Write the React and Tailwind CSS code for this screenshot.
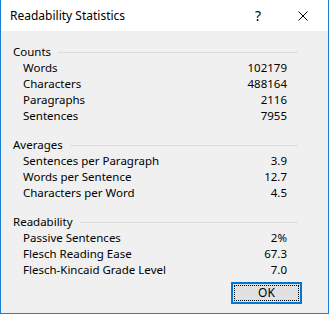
import React from 'react';

const sections = [
  {
    title: 'Counts',
    rows: [
      ['Words', '102179'],
      ['Characters', '488164'],
      ['Paragraphs', '2116'],
      ['Sentences', '7955'],
    ],
  },
  {
    title: 'Averages',
    rows: [
      ['Sentences per Paragraph', '3.9'],
      ['Words per Sentence', '12.7'],
      ['Characters per Word', '4.5'],
    ],
  },
  {
    title: 'Readability',
    rows: [
      ['Passive Sentences', '2%'],
      ['Flesch Reading Ease', '67.3'],
      ['Flesch-Kincaid Grade Level', '7.0'],
    ],
  },
];

function Section({ title, rows }) {
  return (
    <div className="flex flex-col">
      <div className="flex h-[16px] items-center pl-[12px] pr-[30px]">
        <span>{title}</span>
        <div className="ml-[7px] h-px flex-1 bg-[#dcdcdc]" />
      </div>
      {rows.map(([label, value]) => (
        <div key={label} className="flex h-[16px] items-center pl-[22px] pr-[41px]">
          <span className="flex-1">{label}</span>
          <span>{value}</span>
        </div>
      ))}
    </div>
  );
}

export default function App() {
  return (
    <div
      className="flex h-[314px] w-[329px] flex-col border-x border-b border-[#1c7fd6] bg-white text-[11.5px] leading-none text-black"
      style={{ fontFamily: '"Noto Sans", "Open Sans", sans-serif' }}
    >
      <div className="flex h-[31px] shrink-0 items-center bg-white pl-[9px] text-[12px]">
        <span className="flex-1">Readability Statistics</span>
        <span className="mr-[37px] text-[14px]">?</span>
        <svg width="10" height="10" viewBox="0 0 10 10" className="mr-[20px]">
          <path d="M0.5 0.5 L9.5 9.5 M9.5 0.5 L0.5 9.5" stroke="#000" strokeWidth="1" fill="none" />
        </svg>
      </div>
      <div className="flex flex-1 flex-col bg-[#f0f0f0] pt-[13px]">
        <div className="flex flex-col gap-[13px]">
          {sections.map((s) => (
            <Section key={s.title} title={s.title} rows={s.rows} />
          ))}
        </div>
        <div className="flex justify-end pr-[26px] pt-[4px]">
          <button className="flex h-[22px] w-[71px] items-center justify-center border-2 border-[#0078d7] bg-[#e1e1e1] p-[1px] text-[12px]">
            <span className="flex h-full w-full items-center justify-center border border-dotted border-black">
              OK
            </span>
          </button>
        </div>
      </div>
    </div>
  );
}
